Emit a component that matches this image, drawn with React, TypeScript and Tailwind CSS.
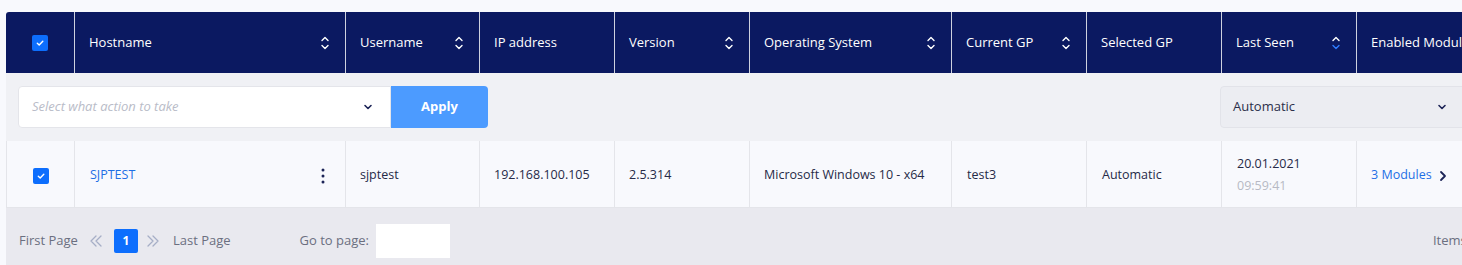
import React from 'react'

const font = { fontFamily: '"Open Sans", "Noto Sans", sans-serif' }

function SortIcon({ active = false }: { active?: boolean }) {
  return (
    <svg width="10" height="16" viewBox="0 0 10 16" fill="none" strokeWidth="1.4" strokeLinecap="round" strokeLinejoin="round">
      <path d="M2 5.5 L5 2.5 L8 5.5" stroke="#ffffff" />
      <path d="M2 10.5 L5 13.5 L8 10.5" stroke={active ? '#2f7bff' : '#ffffff'} />
    </svg>
  )
}

function Check() {
  return (
    <span className="flex h-4 w-4 items-center justify-center rounded-[2px] bg-[#0d6efd]">
      <svg width="10" height="10" viewBox="0 0 10 10" fill="none">
        <path d="M2.3 5.2 L4.2 7 L7.8 3.2" stroke="#fff" strokeWidth="1.4" strokeLinecap="round" strokeLinejoin="round" />
      </svg>
    </span>
  )
}

function ChevronDown({ color = '#1c2457' }: { color?: string }) {
  return (
    <svg width="10" height="8" viewBox="0 0 10 8" fill="none">
      <path d="M2 2.5 L5 5.5 L8 2.5" stroke={color} strokeWidth="1.6" strokeLinecap="round" strokeLinejoin="round" />
    </svg>
  )
}

function DoubleChevron({ dir }: { dir: 'left' | 'right' }) {
  const d = dir === 'left' ? 'M7 2 L2 7 L7 12 M12 2 L7 7 L12 12' : 'M2 2 L7 7 L2 12 M7 2 L12 7 L7 12'
  return (
    <svg width="14" height="14" viewBox="0 0 14 14" fill="none">
      <path d={d} stroke="#a6aec6" strokeWidth="1.3" strokeLinecap="round" strokeLinejoin="round" />
    </svg>
  )
}

const columns = [
  { label: '', w: 'w-[68px]', sort: false },
  { label: 'Hostname', w: 'w-[271px]', sort: true },
  { label: 'Username', w: 'w-[134px]', sort: true },
  { label: 'IP address', w: 'w-[135px]', sort: false },
  { label: 'Version', w: 'w-[135px]', sort: true },
  { label: 'Operating System', w: 'w-[202px]', sort: true },
  { label: 'Current GP', w: 'w-[135px]', sort: true },
  { label: 'Selected GP', w: 'w-[135px]', sort: false },
  { label: 'Last Seen', w: 'w-[135px]', sort: true, active: true },
  { label: 'Enabled Modules', w: 'w-[220px]', sort: false },
]

export default function App() {
  return (
    <div className="h-[265px] w-[1462px] overflow-hidden bg-[#f8f9fd]" style={font}>
      <div className="ml-[6px] mt-[12px] w-[1700px] overflow-hidden rounded-tl-[3px]">
        {/* header */}
        <div className="flex h-[61px] bg-[#0b1961] text-[13px] text-white">
          {columns.map((c, i) => (
            <div
              key={i}
              className={`${c.w} flex shrink-0 items-center justify-between border-l border-white/80 pl-[14px] pr-[15px] first:border-l-0 ${i === 0 ? 'justify-center' : ''}`}
            >
              {i === 0 ? <Check /> : <span>{c.label}</span>}
              {c.sort && <SortIcon active={c.active} />}
            </div>
          ))}
        </div>

        {/* action row */}
        <div className="flex h-[68px] items-center bg-[#f0f1f5] pl-[12px]">
          <div className="flex h-[42px] w-[373px] items-center justify-between rounded-l-[4px] border border-[#e4e5ea] bg-white pl-[13px] pr-[17px]">
            <span className="text-[13px] italic text-[#b9bcc8]">Select what action to take</span>
            <ChevronDown />
          </div>
          <button className="h-[42px] w-[97px] rounded-r-[4px] bg-[#4c9bff] text-[13px] font-bold text-white">Apply</button>
          <div className="ml-[732px] flex h-[42px] w-[260px] items-center justify-between rounded-[4px] border border-[#e2e3e9] bg-[#ecedf2] pl-[12px] pr-[14px]">
            <span className="text-[13px] text-[#2b2f4a]">Automatic</span>
            <span className="mr-[18px]"><ChevronDown /></span>
          </div>
        </div>

        {/* data row */}
        <div className="flex h-[67px] border-b border-[#e4e5ea] bg-[#f8f9fd] text-[12.5px] text-[#262a47] [&>div]:pt-[3px]">
          <div className="flex w-[68px] shrink-0 items-center justify-center border-l border-[#e4e5ea]">
            <Check />
          </div>
          <div className="flex w-[271px] shrink-0 items-center justify-between border-l border-[#e4e5ea] pl-[15px] pr-[20px]">
            <span className="text-[#1f6fe5]">SJPTEST</span>
            <svg width="4" height="16" viewBox="0 0 4 16">
              <circle cx="2" cy="2" r="1.5" fill="#1c2457" />
              <circle cx="2" cy="8" r="1.5" fill="#1c2457" />
              <circle cx="2" cy="14" r="1.5" fill="#1c2457" />
            </svg>
          </div>
          <div className="flex w-[134px] shrink-0 items-center border-l border-[#e4e5ea] px-[14px]">sjptest</div>
          <div className="flex w-[135px] shrink-0 items-center border-l border-[#e4e5ea] px-[14px]">192.168.100.105</div>
          <div className="flex w-[135px] shrink-0 items-center border-l border-[#e4e5ea] px-[14px]">2.5.314</div>
          <div className="flex w-[202px] shrink-0 items-center border-l border-[#e4e5ea] px-[14px]">Microsoft Windows 10 - x64</div>
          <div className="flex w-[135px] shrink-0 items-center border-l border-[#e4e5ea] px-[15px]">test3</div>
          <div className="flex w-[135px] shrink-0 items-center border-l border-[#e4e5ea] px-[15px]">Automatic</div>
          <div className="flex w-[135px] shrink-0 flex-col justify-center gap-[3px] border-l border-[#e4e5ea] px-[15px]">
            <span>20.01.2021</span>
            <span className="text-[#b7b9c4]">09:59:41</span>
          </div>
          <div className="flex w-[220px] shrink-0 items-center gap-[7px] border-l border-[#e4e5ea] px-[14px]">
            <span className="text-[#1f6fe5]">3 Modules</span>
            <svg width="8" height="12" viewBox="0 0 8 12" fill="none">
              <path d="M2 2 L6 6 L2 10" stroke="#1c2457" strokeWidth="1.8" strokeLinecap="round" strokeLinejoin="round" />
            </svg>
          </div>
        </div>

        {/* footer */}
        <div className="flex h-[64px] items-center bg-[#e9e9ef] pl-[13px] pt-[2px] text-[13px] text-[#6b6f80]">
          <span>First Page</span>
          <span className="ml-[11px] flex"><DoubleChevron dir="left" /></span>
          <span className="ml-[11px] flex h-[24px] w-[24px] items-center justify-center rounded-[2px] bg-[#0d6efd] text-[12px] font-bold text-white">1</span>
          <span className="ml-[8px] flex"><DoubleChevron dir="right" /></span>
          <span className="ml-[13px]">Last Page</span>
          <span className="ml-[69px]">Go to page:</span>
          <span className="ml-[7px] h-[34px] w-[74px] bg-white" />
          <span className="ml-[983px]">Items</span>
        </div>
      </div>
    </div>
  )
}
